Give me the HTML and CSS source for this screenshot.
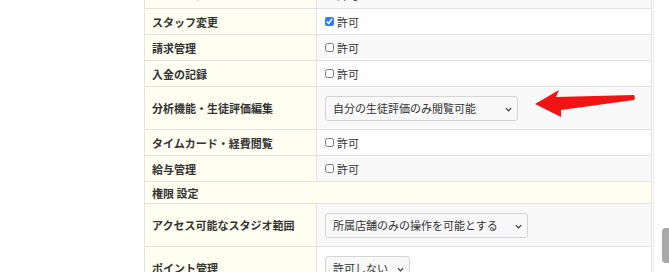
FILE: index.html
```html
<!doctype html>
<html lang="ja">
  <head>
    <meta charset="UTF-8" />
    <meta name="viewport" content="width=device-width, initial-scale=1.0" />
    <title>権限設定</title>
    <link rel="stylesheet" href="styles.css">
  </head>
  <body>
    <div class="page">
      <div class="content">
        <!-- 権限テーブル -->
        <table class="perm">
          <tr class="alt cut">
            <th>スタッフ閲覧</th>
            <td><label class="check"><input type="checkbox" checked>許可</label></td>
          </tr>
          <tr>
            <th>スタッフ変更</th>
            <td><label class="check"><input type="checkbox" checked>許可</label></td>
          </tr>
          <tr class="alt">
            <th>請求管理</th>
            <td><label class="check"><input type="checkbox">許可</label></td>
          </tr>
          <tr>
            <th>入金の記録</th>
            <td><label class="check"><input type="checkbox">許可</label></td>
          </tr>
          <tr class="alt tall">
            <th>分析機能・生徒評価編集</th>
            <td>
              <span class="sel">
                <select class="w-eval">
                  <option>自分の生徒評価のみ閲覧可能</option>
                </select>
                <svg class="chev" viewBox="0 0 8 5"><path d="M1 1 L4 4 L7 1" fill="none" stroke="#333" stroke-width="1.4"/></svg>
              </span>
            </td>
          </tr>
          <tr>
            <th>タイムカード・経費閲覧</th>
            <td><label class="check"><input type="checkbox">許可</label></td>
          </tr>
          <tr class="alt">
            <th>給与管理</th>
            <td><label class="check"><input type="checkbox">許可</label></td>
          </tr>
          <tr class="section">
            <th colspan="2">権限 設定</th>
          </tr>
          <tr class="alt tall">
            <th>アクセス可能なスタジオ範囲</th>
            <td>
              <span class="sel">
                <select class="w-studio">
                  <option>所属店舗のみの操作を可能とする</option>
                </select>
                <svg class="chev" viewBox="0 0 8 5"><path d="M1 1 L4 4 L7 1" fill="none" stroke="#333" stroke-width="1.4"/></svg>
              </span>
            </td>
          </tr>
          <tr class="tall">
            <th>ポイント管理</th>
            <td>
              <span class="sel">
                <select class="w-point">
                  <option>許可しない</option>
                </select>
                <svg class="chev" viewBox="0 0 8 5"><path d="M1 1 L4 4 L7 1" fill="none" stroke="#333" stroke-width="1.4"/></svg>
              </span>
            </td>
          </tr>
        </table>
      </div>

      <!-- スクロールバー -->
      <div class="scrollbar"><div class="thumb"></div></div>

      <!-- 注釈の矢印 -->
      <svg class="arrow" viewBox="0 0 669 272">
        <polygon points="535,104 559,90 556,97 634,95 635,98 634,100 561,110 561,117" fill="#f01414"/>
      </svg>
    </div>
  </body>
</html>
```

FILE: styles.css
```css
* {
  margin: 0;
  padding: 0;
  box-sizing: border-box;
}

body {
  font-family: "Noto Sans CJK JP", "Noto Sans", sans-serif;
  color: #333;
  background: #fff;
  overflow: hidden;
}

.page {
  position: relative;
  display: flex;
  height: 272px;
  overflow: hidden;
}

.content {
  flex: 1;
  padding-left: 144px;
}

.perm {
  border-collapse: collapse;
  width: 508px;
  margin-top: -18px;
  font-size: 11px;
}

.perm th,
.perm td {
  border: 1px solid #e2e2e2;
  height: 26px;
  vertical-align: middle;
}

.perm th {
  width: 172px;
  padding: 0 7px;
  text-align: left;
  font-weight: 700;
  background: #fefef1;
}

.perm td {
  padding: 0 8px;
  background: #fff;
}

.perm tr.alt td {
  background: #f9f9f9;
}

/* 上にスクロールして見切れている行 */
.perm tr.cut th,
.perm tr.cut td {
  vertical-align: top;
  padding-top: 3px;
}

.perm tr.tall th,
.perm tr.tall td {
  height: 43px;
}

.perm tr.section th {
  height: 22px;
}

.check {
  display: inline-flex;
  align-items: center;
  gap: 3px;
}

.check input {
  width: 9px;
  height: 9px;
  margin: 0;
  accent-color: #2b7bf3;
}

.sel {
  position: relative;
  display: inline-block;
  vertical-align: middle;
}

.sel select {
  appearance: none;
  -webkit-appearance: none;
  display: block;
  height: 25px;
  padding: 0 20px 0 7px;
  font: inherit;
  font-size: 11px;
  color: #333;
  background: #f8f8f8;
  border: 1px solid #d4d4d4;
  border-radius: 3px;
}

.w-eval { width: 193px; }
.w-studio { width: 203px; }
.w-point { width: 85px; }

.chev {
  position: absolute;
  right: 6px;
  top: 11px;
  width: 7px;
  height: 5px;
}

.scrollbar {
  width: 16px;
  border-left: 1px solid #ececec;
  background: #fff;
}

.thumb {
  width: 8px;
  height: 35px;
  margin: 228px 0 0 8px;
  background: #a8a8a8;
  border-radius: 4px 0 0 4px;
}

.arrow {
  position: absolute;
  top: 0;
  left: 0;
  width: 669px;
  height: 272px;
  pointer-events: none;
}
```
